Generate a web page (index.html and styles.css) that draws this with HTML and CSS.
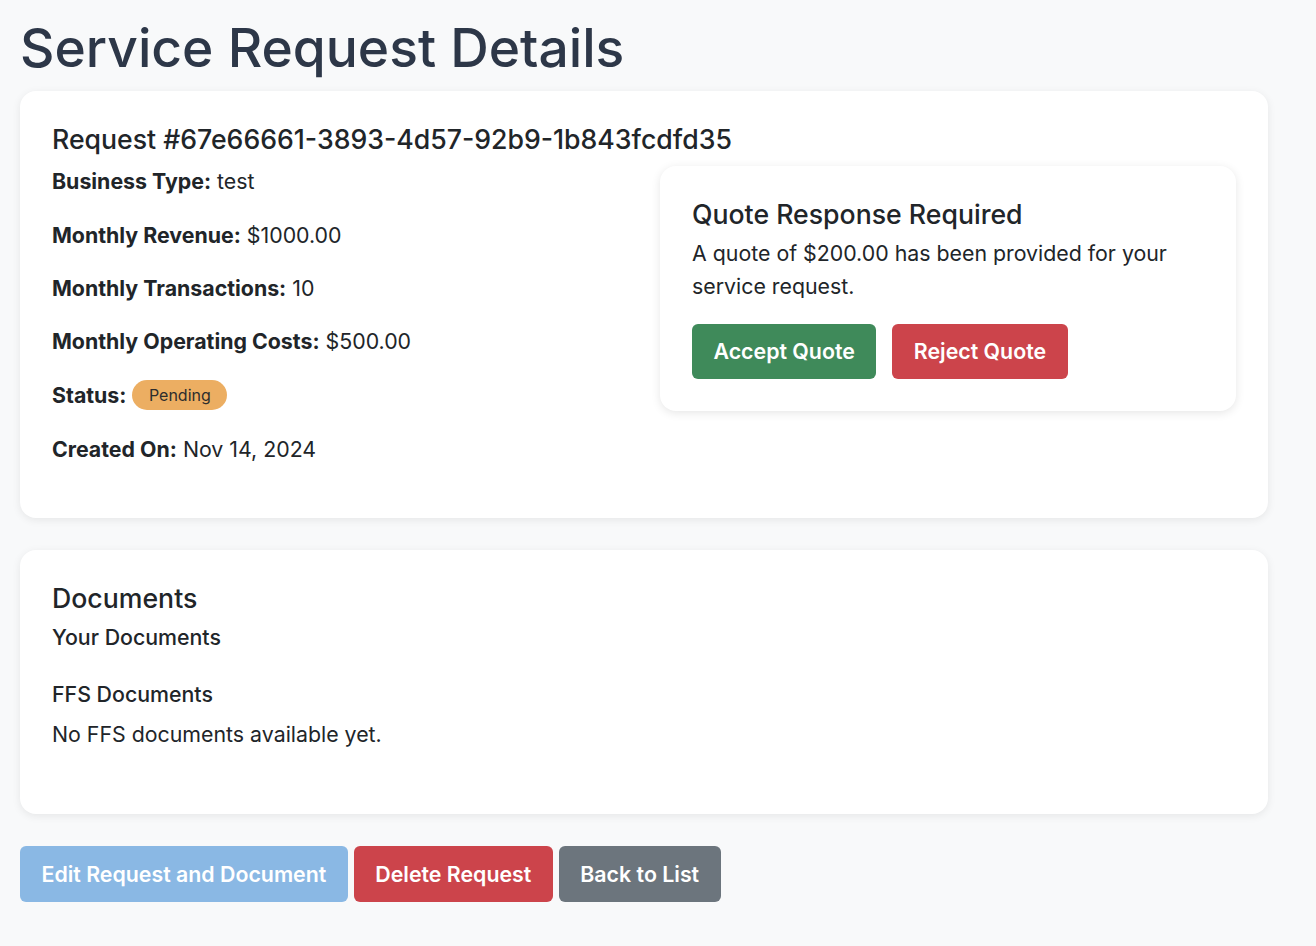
FILE: index.html
```html
<!DOCTYPE html>
<html lang="en">
<head>
<meta charset="utf-8">
<title>Service Request Details</title>
<link rel="stylesheet" href="styles.css">
</head>
<body>
<main class="page">
  <h1 class="page-title">Service Request Details</h1>

  <section class="card">
    <h2 class="card-title">Request #67e66661-3893-4d57-92b9-1b843fcdfd35</h2>
    <div class="details-grid">
      <div class="details">
        <p class="detail"><strong>Business Type:</strong> test</p>
        <p class="detail"><strong>Monthly Revenue:</strong> $1000.00</p>
        <p class="detail"><strong>Monthly Transactions:</strong> 10</p>
        <p class="detail"><strong>Monthly Operating Costs:</strong> $500.00</p>
        <p class="detail"><strong>Status:</strong> <span class="badge">Pending</span></p>
        <p class="detail"><strong>Created On:</strong> Nov 14, 2024</p>
      </div>
      <div class="quote-col">
        <div class="quote-box">
          <h3 class="quote-title">Quote Response Required</h3>
          <p class="quote-text">A quote of $200.00 has been provided for your service request.</p>
          <div class="quote-actions">
            <button class="btn btn-success">Accept Quote</button>
            <button class="btn btn-danger">Reject Quote</button>
          </div>
        </div>
      </div>
    </div>
  </section>

  <section class="card docs">
    <h2 class="docs-title">Documents</h2>
    <div class="doc-group">
      <h3 class="doc-heading">Your Documents</h3>
      <ul class="doc-list"></ul>
    </div>
    <div class="doc-group">
      <h3 class="doc-heading">FFS Documents</h3>
      <p class="doc-empty">No FFS documents available yet.</p>
    </div>
  </section>

  <div class="page-actions">
    <button class="btn btn-primary-light">Edit Request and Document</button>
    <button class="btn btn-danger">Delete Request</button>
    <button class="btn btn-secondary">Back to List</button>
  </div>
</main>
</body>
</html>
```

FILE: styles.css
```css
* { box-sizing: border-box; }

html, body {
  margin: 0;
  padding: 0;
}

body {
  background: #f8f9fa;
  font-family: Inter, "Noto Sans", "Liberation Sans", sans-serif;
  color: #212529;
  font-size: 21.33px;
  line-height: 32px;
}

.page {
  padding: 16px 48px 40px 20px;
}

.page-title {
  margin: 0 0 10.67px 0;
  font-size: 53.33px;
  font-weight: 500;
  line-height: 64px;
  color: #2d3748;
}

.card {
  background: #fff;
  border-radius: 16px;
  box-shadow: 0 2px 8px rgba(0, 0, 0, 0.08);
  padding: 32px;
  margin-bottom: 32px;
}

.card-title {
  margin: 0 0 10.67px 0;
  font-size: 26.67px;
  font-weight: 500;
  line-height: 32px;
}

.details-grid {
  display: grid;
  grid-template-columns: 1fr 1fr;
  column-gap: 32px;
  align-items: start;
}

.detail {
  margin: 0 0 21.33px 0;
  line-height: 32px;
}

.detail strong {
  font-weight: 700;
}

.badge {
  display: inline-block;
  background: #ecae62;
  color: #2d2d2d;
  font-size: 16px;
  line-height: 30px;
  padding: 0 16.5px;
  border-radius: 15px;
  vertical-align: middle;
  position: relative;
  top: -2px;
}

.quote-box {
  margin-top: 1px;
  background: #fff;
  border-radius: 16px;
  box-shadow: 0 2px 10px rgba(0, 0, 0, 0.1);
  padding: 32px;
}

.quote-title {
  margin: 0 0 7px 0;
  font-size: 26.67px;
  font-weight: 500;
  line-height: 32px;
}

.quote-text {
  margin: 0 0 21.33px 0;
  line-height: 32.5px;
}

.quote-actions {
  display: flex;
  gap: 16px;
}

.btn {
  font-family: inherit;
  font-size: 21.33px;
  font-weight: 600;
  line-height: 32px;
  padding: 10.67px 20.5px;
  border: 1px solid transparent;
  border-radius: 6px;
  color: #fff;
  cursor: pointer;
}

.btn-success { background: #3f8a5a; }
.btn-danger { background: #cc444b; }
.btn-secondary { background: #6c757d; }
.btn-primary-light { background: #8ab8e4; }

.docs-title {
  margin: 0 0 10.67px 0;
  font-size: 26.67px;
  font-weight: 500;
  line-height: 32px;
}

.doc-heading {
  margin: 0 0 10.67px 0;
  font-size: 21.33px;
  font-weight: 500;
  line-height: 25.6px;
}

.doc-list {
  margin: 0 0 31.5px 0;
  padding: 0;
  list-style: none;
}

.doc-empty {
  margin: 0 0 32px 0;
}

.page-actions {
  display: flex;
  gap: 6px;
}
```
